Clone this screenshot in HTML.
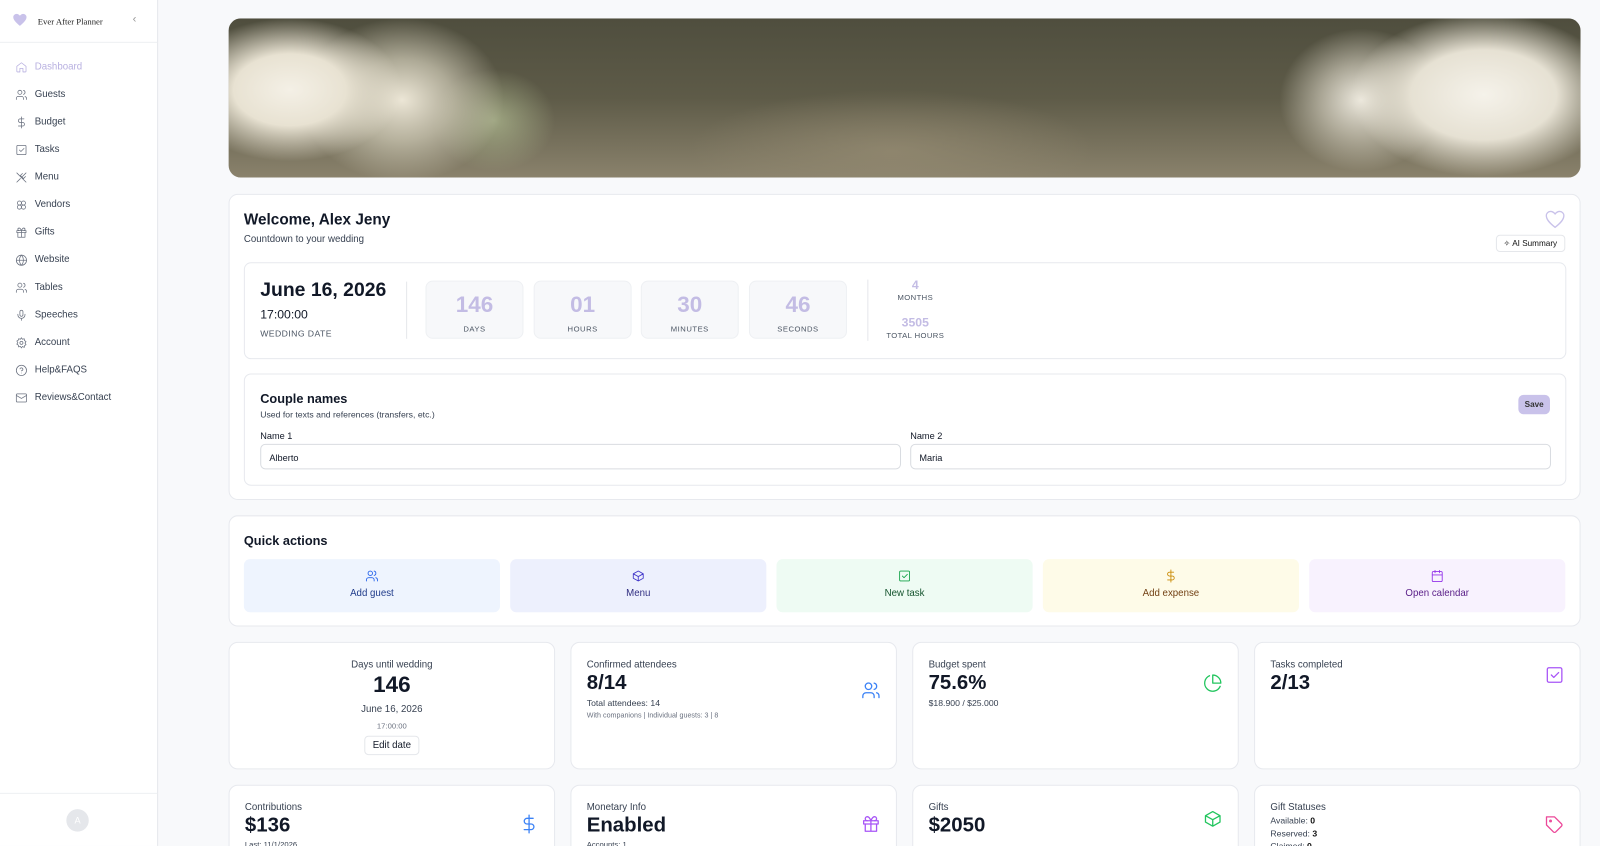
<!DOCTYPE html>
<html><head><meta charset="utf-8"><style>
*{box-sizing:border-box;margin:0;padding:0}
html,body{width:1600px;height:846px;overflow:hidden;background:#f8f9fb}
body{font-family:"Liberation Sans",Arial,sans-serif;color:#111827;position:relative}
#w{position:absolute;left:0;top:0;width:1568px;height:829px;transform:scale(1.0204);transform-origin:0 0}
.sb{position:absolute;left:0;top:0;width:155px;height:829px;background:#fff;border-right:1px solid #e5e7eb}
.sbh{height:42px;border-bottom:1px solid #eef0f3;position:relative}
.logo{position:absolute;left:37px;top:16px;font-family:"Liberation Serif",serif;font-size:8.5px;color:#222}
.nav{position:absolute;left:0;top:52px;width:155px}
.ni{height:27px;display:flex;align-items:center;padding-left:15px;font-size:9.5px;color:#374151}
.ni svg{width:12px;height:12px;margin-right:7px;stroke:#6b7280;fill:none;stroke-width:1.5;stroke-linecap:round;stroke-linejoin:round}
.ni.act{color:#b8b0e0}.ni.act svg{stroke:#b8b0e0}
.sbf{position:absolute;left:0;bottom:0;width:154px;height:52px;border-top:1px solid #eef0f3}
.av{position:absolute;left:65px;top:15px;width:22px;height:22px;border-radius:50%;background:#e5e7eb;color:#fff;font-size:9px;text-align:center;line-height:22px}
.card{position:absolute;background:#fff;border:1px solid #e7e9ee;border-radius:9px}
.banner{position:absolute;left:224px;top:18px;width:1325px;height:156px;border-radius:12px;overflow:hidden;
background:
radial-gradient(ellipse 110px 70px at 60px 70px,#f4f0e6 0%,#e8e2d2 50%,transparent 100%),
radial-gradient(ellipse 100px 80px at 170px 80px,#ece6d6 0%,rgba(210,205,185,.7) 50%,transparent 100%),
radial-gradient(ellipse 60px 50px at 260px 100px,rgba(170,180,140,.8),transparent),
radial-gradient(ellipse 130px 80px at 1230px 75px,#f5f2ea 0%,#e6e1d3 55%,transparent 100%),
radial-gradient(ellipse 80px 70px at 1110px 80px,#ede9de 0%,rgba(220,215,200,.6) 50%,transparent 100%),
radial-gradient(ellipse 200px 60px at 650px 130px,rgba(150,140,115,.7),transparent),
linear-gradient(180deg,#4f4e3e 0%,#5e5b48 50%,#8a826c 100%)}
.h1{font-size:15px;font-weight:bold}
.sm{font-size:9.5px;color:#374151}
.cd{position:absolute;top:17px;width:96px;height:57px;background:#f7f8fa;border:1px solid #eef0f3;border-radius:7px;text-align:center}
.cd b{display:block;font-size:22px;color:#c3bce4;margin-top:10px}
.cd span{font-size:7.5px;color:#4b5563;letter-spacing:.5px}
.inp{position:absolute;top:68px;height:25px;border:1px solid #d9dce1;border-radius:5px;font-size:9px;padding:8px 8px}
.qa{position:absolute;top:42px;width:251px;height:52px;border-radius:6px;text-align:center;font-size:9.5px}
.qa svg{display:block;margin:10px auto 5px;width:13px;height:13px;fill:none;stroke-width:1.6;stroke-linecap:round;stroke-linejoin:round}
.st .l{font-size:9.5px;color:#374151;position:absolute;left:15px;top:16px}
.st .v{font-size:20px;font-weight:bold;position:absolute;left:15px;top:28px}
.st svg.ic{position:absolute;right:15px;width:19px;height:19px;fill:none;stroke-width:1.6;stroke-linecap:round;stroke-linejoin:round}
</style></head><body><div id="w">
<div class="sb">
 <div class="sbh">
  <svg style="position:absolute;left:12px;top:13px" width="15" height="13" viewBox="0 0 24 22"><path d="M12 21C5 15 1 11 1 6.5 1 3.5 3.5 1 6.5 1c2.2 0 4 1.2 5.5 3C13.5 2.2 15.3 1 17.5 1 20.5 1 23 3.5 23 6.5 23 11 19 15 12 21z" fill="#c9c2ea"/></svg>
  <div class="logo">Ever After Planner</div>
  <div style="position:absolute;left:130px;top:13px;color:#999;font-size:11px">‹</div>
 </div>
 <div class="nav">
  <div class="ni act"><svg viewBox="0 0 24 24"><path d="M3 10l9-7 9 7v10a1 1 0 0 1-1 1h-5v-7h-6v7H4a1 1 0 0 1-1-1z"/></svg>Dashboard</div>
  <div class="ni"><svg viewBox="0 0 24 24"><circle cx="9" cy="7" r="4"/><path d="M2 21v-2a4 4 0 0 1 4-4h6a4 4 0 0 1 4 4v2M16 3.1a4 4 0 0 1 0 7.8M22 21v-2a4 4 0 0 0-3-3.9"/></svg>Guests</div>
  <div class="ni"><svg viewBox="0 0 24 24"><path d="M12 1v22M17 5H9.5a3.5 3.5 0 0 0 0 7h5a3.5 3.5 0 0 1 0 7H6"/></svg>Budget</div>
  <div class="ni"><svg viewBox="0 0 24 24"><rect x="3" y="3" width="18" height="18" rx="2"/><path d="M8 12l3 3 6-6"/></svg>Tasks</div>
  <div class="ni"><svg viewBox="0 0 24 24"><path d="M3 3l18 18M14 4l-4 4 6 6 4-4M21 3l-7 7M3 21l7-7"/></svg>Menu</div>
  <div class="ni"><svg viewBox="0 0 24 24"><circle cx="8" cy="8" r="4"/><circle cx="16" cy="8" r="4"/><circle cx="8" cy="16" r="4"/><circle cx="16" cy="16" r="4"/></svg>Vendors</div>
  <div class="ni"><svg viewBox="0 0 24 24"><rect x="3" y="8" width="18" height="4"/><path d="M12 8v13M19 12v9H5v-9M7.5 8a2.5 2.5 0 0 1 0-5C10 3 12 8 12 8s2-5 4.5-5a2.5 2.5 0 0 1 0 5"/></svg>Gifts</div>
  <div class="ni"><svg viewBox="0 0 24 24"><circle cx="12" cy="12" r="10"/><path d="M2 12h20M12 2a15 15 0 0 1 0 20 15 15 0 0 1 0-20"/></svg>Website</div>
  <div class="ni"><svg viewBox="0 0 24 24"><circle cx="9" cy="7" r="4"/><path d="M2 21v-2a4 4 0 0 1 4-4h6a4 4 0 0 1 4 4v2M16 3.1a4 4 0 0 1 0 7.8M22 21v-2a4 4 0 0 0-3-3.9"/></svg>Tables</div>
  <div class="ni"><svg viewBox="0 0 24 24"><rect x="9" y="2" width="6" height="12" rx="3"/><path d="M19 10v1a7 7 0 0 1-14 0v-1M12 18v4"/></svg>Speeches</div>
  <div class="ni"><svg viewBox="0 0 24 24"><circle cx="12" cy="12" r="3"/><path d="M12 2l2 3 3.5-1 .5 3.5 3 2-2 3 2 3-3 2-.5 3.5L14 19l-2 3-2-3-3.5 1-.5-3.5-3-2 2-3-2-3 3-2L6.5 4 10 5z"/></svg>Account</div>
  <div class="ni"><svg viewBox="0 0 24 24"><circle cx="12" cy="12" r="10"/><path d="M9.1 9a3 3 0 0 1 5.8 1c0 2-3 3-3 3M12 17h.01"/></svg>Help&amp;FAQS</div>
  <div class="ni"><svg viewBox="0 0 24 24"><rect x="2" y="4" width="20" height="16" rx="2"/><path d="M22 7l-10 6L2 7"/></svg>Reviews&amp;Contact</div>
 </div>
 <div class="sbf"><div class="av">A</div></div>
</div>

<div class="banner"></div>

<div class="card" style="left:224px;top:190px;width:1325px;height:300px">
 <div class="h1" style="position:absolute;left:14px;top:16px">Welcome, Alex Jeny</div>
 <div class="sm" style="position:absolute;left:14px;top:38px">Countdown to your wedding</div>
 <svg style="position:absolute;right:14px;top:15px" width="20" height="18" viewBox="0 0 24 22"><path d="M12 20.5C5 15 1.5 11 1.5 6.5 1.5 3.7 3.7 1.5 6.5 1.5c2.2 0 4 1.2 5.5 3 1.5-1.8 3.3-3 5.5-3 2.8 0 5 2.2 5 5 0 4.5-3.5 8.5-10.5 14z" fill="none" stroke="#c9c2ea" stroke-width="1.6"/></svg>
 <div style="position:absolute;right:14px;top:39px;height:17px;border:1px solid #e5e7eb;border-radius:4px;font-size:8px;padding:3px 7px;color:#111">✧ AI Summary</div>
 <div class="card" style="left:14px;top:66px;width:1296px;height:95px;border-radius:7px">
  <div style="position:absolute;left:15px;top:16px;font-size:19px;font-weight:bold">June 16, 2026</div>
  <div style="position:absolute;left:15px;top:43px;font-size:12px">17:00:00</div>
  <div style="position:absolute;left:15px;top:64px;font-size:8.5px;color:#4b5563;letter-spacing:.4px">WEDDING DATE</div>
  <div style="position:absolute;left:158px;top:18px;width:1px;height:56px;background:#e5e7eb"></div>
  <div class="cd" style="left:177px"><b>146</b><span>DAYS</span></div>
  <div class="cd" style="left:283px"><b>01</b><span>HOURS</span></div>
  <div class="cd" style="left:388px"><b>30</b><span>MINUTES</span></div>
  <div class="cd" style="left:494px"><b>46</b><span>SECONDS</span></div>
  <div style="position:absolute;left:610px;top:16px;width:1px;height:60px;background:#e5e7eb"></div>
  <div style="position:absolute;left:622px;top:14px;width:70px;text-align:center;color:#c3bce4;font-weight:bold;font-size:12px">4<div style="font-size:7.5px;color:#4b5563;font-weight:normal;letter-spacing:.4px;margin-top:1px">MONTHS</div></div>
  <div style="position:absolute;left:622px;top:51px;width:70px;text-align:center;color:#c3bce4;font-weight:bold;font-size:12px">3505<div style="font-size:7.5px;color:#4b5563;font-weight:normal;letter-spacing:.4px;margin-top:1px">TOTAL HOURS</div></div>
 </div>
 <div class="card" style="left:14px;top:175px;width:1296px;height:110px;border-radius:7px">
  <div style="position:absolute;left:15px;top:17px;font-size:12.5px;font-weight:bold">Couple names</div>
  <div style="position:absolute;left:15px;top:34px;font-size:8.5px;color:#374151">Used for texts and references (transfers, etc.)</div>
  <div style="position:absolute;right:15px;top:20px;width:31px;height:19px;background:#c9c2ea;border-radius:5px;font-size:8px;font-weight:bold;text-align:center;line-height:19px;color:#333">Save</div>
  <div style="position:absolute;left:15px;top:55px;font-size:9px">Name 1</div>
  <div style="position:absolute;left:652px;top:55px;font-size:9px">Name 2</div>
  <div class="inp" style="left:15px;width:628px">Alberto</div>
  <div class="inp" style="left:652px;width:628px">Maria</div>
 </div>
</div>

<div class="card" style="left:224px;top:505px;width:1325px;height:109px">
 <div style="position:absolute;left:14px;top:17px;font-size:12.5px;font-weight:bold">Quick actions</div>
 <div class="qa" style="left:14px;background:#eef4fe;color:#1e3a8a"><svg viewBox="0 0 24 24" stroke="#2563eb"><circle cx="9" cy="7" r="4"/><path d="M2 21v-2a4 4 0 0 1 4-4h6a4 4 0 0 1 4 4v2M16 3.1a4 4 0 0 1 0 7.8M22 21v-2a4 4 0 0 0-3-3.9"/></svg>Add guest</div>
 <div class="qa" style="left:275px;background:#edf0fd;color:#312e81"><svg viewBox="0 0 24 24" stroke="#4338ca"><path d="M21 8l-9-5-9 5v8l9 5 9-5zM3 8l9 5 9-5M12 13v8"/></svg>Menu</div>
 <div class="qa" style="left:536px;background:#eefbf3;color:#14532d"><svg viewBox="0 0 24 24" stroke="#16a34a"><rect x="3" y="3" width="18" height="18" rx="2"/><path d="M8 12l3 3 6-6"/></svg>New task</div>
 <div class="qa" style="left:797px;background:#fefbe8;color:#713f12"><svg viewBox="0 0 24 24" stroke="#ca8a04"><path d="M12 1v22M17 5H9.5a3.5 3.5 0 0 0 0 7h5a3.5 3.5 0 0 1 0 7H6"/></svg>Add expense</div>
 <div class="qa" style="left:1058px;background:#f8f2fe;color:#581c87"><svg viewBox="0 0 24 24" stroke="#9333ea"><rect x="3" y="4" width="18" height="18" rx="2"/><path d="M16 2v4M8 2v4M3 10h18"/></svg>Open calendar</div>
</div>

<div class="card" style="left:224px;top:629px;width:320px;height:125px;text-align:center">
 <div style="font-size:9.5px;color:#374151;margin-top:16px">Days until wedding</div>
 <div style="font-size:22px;font-weight:bold;margin-top:1px">146</div>
 <div style="font-size:9.5px;color:#374151;margin-top:6px">June 16, 2026</div>
 <div style="font-size:7.5px;color:#6b7280;margin-top:6px">17:00:00</div>
 <div style="display:inline-block;margin-top:5px;border:1px solid #e5e7eb;border-radius:4px;font-size:9.5px;padding:3px 7px">Edit date</div>
</div>
<div class="card st" style="left:559px;top:629px;width:320px;height:125px">
 <div class="l">Confirmed attendees</div><div class="v">8/14</div>
 <div style="position:absolute;left:15px;top:54px;font-size:8.5px;color:#374151">Total attendees: 14</div>
 <div style="position:absolute;left:15px;top:68px;font-size:7px;color:#6b7280">With companions | Individual guests: 3 | 8</div>
 <svg class="ic" style="top:37px" viewBox="0 0 24 24" stroke="#3b82f6"><circle cx="9" cy="7" r="4"/><path d="M2 21v-2a4 4 0 0 1 4-4h6a4 4 0 0 1 4 4v2M16 3.1a4 4 0 0 1 0 7.8M22 21v-2a4 4 0 0 0-3-3.9"/></svg>
</div>
<div class="card st" style="left:894px;top:629px;width:320px;height:125px">
 <div class="l">Budget spent</div><div class="v">75.6%</div>
 <div style="position:absolute;left:15px;top:54px;font-size:8.5px;color:#374151">$18.900 / $25.000</div>
 <svg class="ic" style="top:30px" viewBox="0 0 24 24" stroke="#22c55e"><path d="M21.2 15.9A10 10 0 1 1 8 2.8"/><path d="M22 12A10 10 0 0 0 12 2v10z"/></svg>
</div>
<div class="card st" style="left:1229px;top:629px;width:320px;height:125px">
 <div class="l">Tasks completed</div><div class="v">2/13</div>
 <svg class="ic" style="top:22px" viewBox="0 0 24 24" stroke="#a855f7"><rect x="3" y="3" width="18" height="18" rx="2"/><path d="M8 12l3 3 6-6"/></svg>
</div>

<div class="card st" style="left:224px;top:769px;width:320px;height:100px">
 <div class="l">Contributions</div><div class="v">$136</div>
 <div style="position:absolute;left:15px;top:53px;font-size:7.5px;color:#374151">Last: 11/1/2026</div>
 <svg class="ic" style="top:28px" viewBox="0 0 24 24" stroke="#3b82f6"><path d="M12 1v22M17 5H9.5a3.5 3.5 0 0 0 0 7h5a3.5 3.5 0 0 1 0 7H6"/></svg>
</div>
<div class="card st" style="left:559px;top:769px;width:320px;height:100px">
 <div class="l">Monetary Info</div><div class="v">Enabled</div>
 <div style="position:absolute;left:15px;top:53px;font-size:7.5px;color:#374151">Accounts: 1</div>
 <svg class="ic" style="top:28px" viewBox="0 0 24 24" stroke="#a855f7"><rect x="3" y="8" width="18" height="4"/><path d="M12 8v13M19 12v9H5v-9M7.5 8a2.5 2.5 0 0 1 0-5C10 3 12 8 12 8s2-5 4.5-5a2.5 2.5 0 0 1 0 5"/></svg>
</div>
<div class="card st" style="left:894px;top:769px;width:320px;height:100px">
 <div class="l">Gifts</div><div class="v">$2050</div>
 <svg class="ic" style="top:23px" viewBox="0 0 24 24" stroke="#22c55e"><path d="M21 8l-9-5-9 5v8l9 5 9-5zM3 8l9 5 9-5M12 13v8"/></svg>
</div>
<div class="card st" style="left:1229px;top:769px;width:320px;height:100px">
 <div class="l">Gift Statuses</div>
 <div style="position:absolute;left:15px;top:28px;font-size:8.5px;color:#374151;line-height:12.5px">Available: <b style="color:#111">0</b><br>Reserved: <b style="color:#111">3</b><br>Claimed: <b style="color:#111">0</b></div>
 <svg class="ic" style="top:29px" viewBox="0 0 24 24" stroke="#ec4899"><path d="M20.6 13.4l-7.2 7.2a2 2 0 0 1-2.8 0L2 12V2h10l8.6 8.6a2 2 0 0 1 0 2.8z"/><circle cx="7" cy="7" r="1"/></svg>
</div>
</div></body></html>
